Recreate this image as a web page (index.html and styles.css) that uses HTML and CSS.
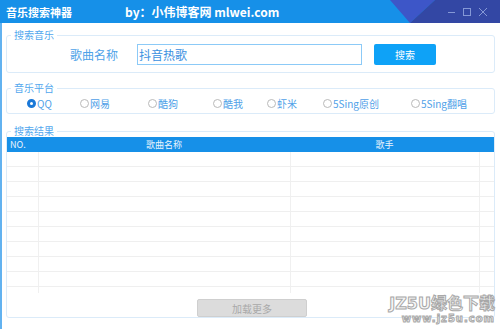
FILE: index.html
```html
<!DOCTYPE html>
<html lang="zh-CN">
<head>
    <meta charset="UTF-8">
    <title>音乐搜索神器</title>
    <link rel="stylesheet" href="styles.css">
</head>
<body>
    <div class="window">
        <div class="titlebar">
            <svg class="title-bg" width="110" height="23" viewBox="0 0 110 23">
                <polygon points="0,0 45,0 20,23" fill="#3d56c8"/>
                <polygon points="45,0 110,0 110,23 20,23" fill="#3347a4"/>
            </svg>
            <span class="app-name">音乐搜索神器</span>
            <span class="by">by：小伟博客网 mlwei.com</span>
            <div class="controls">
                <svg width="46" height="12" viewBox="0 0 46 12">
                    <line x1="1" y1="6.5" x2="8" y2="6.5" stroke="#8598d6" stroke-width="1"/>
                    <rect x="16.5" y="2.5" width="7" height="7" fill="none" stroke="#8598d6" stroke-width="1"/>
                    <line x1="32" y1="2" x2="40" y2="10" stroke="#8598d6" stroke-width="1"/>
                    <line x1="40" y1="2" x2="32" y2="10" stroke="#8598d6" stroke-width="1"/>
                </svg>
            </div>
        </div>

        <div class="main">
            <fieldset class="group search-group">
                <legend>搜索音乐</legend>
                <div class="search-row">
                    <span class="field-label">歌曲名称</span>
                    <input class="song-input" type="text" value="抖音热歌">
                    <button class="search-btn">搜索</button>
                </div>
            </fieldset>

            <fieldset class="group platform-group">
                <legend>音乐平台</legend>
                <div class="radios">
                    <label class="radio checked"><span class="dot"></span>QQ</label>
                    <label class="radio"><span class="dot"></span>网易</label>
                    <label class="radio"><span class="dot"></span>酷狗</label>
                    <label class="radio"><span class="dot"></span>酷我</label>
                    <label class="radio"><span class="dot"></span>虾米</label>
                    <label class="radio"><span class="dot"></span>5Sing原创</label>
                    <label class="radio"><span class="dot"></span>5Sing翻唱</label>
                </div>
            </fieldset>

            <fieldset class="group result-group">
                <legend>搜索结果</legend>
                <div class="grid-wrap">
                    <table class="results">
                        <thead>
                            <tr>
                                <th class="c-no">NO.</th>
                                <th class="c-song">歌曲名称</th>
                                <th class="c-artist">歌手</th>
                                <th class="c-end"></th>
                            </tr>
                        </thead>
                        <tbody>
                            <tr><td></td><td></td><td></td><td></td></tr>
                            <tr><td></td><td></td><td></td><td></td></tr>
                            <tr><td></td><td></td><td></td><td></td></tr>
                            <tr><td></td><td></td><td></td><td></td></tr>
                            <tr><td></td><td></td><td></td><td></td></tr>
                            <tr><td></td><td></td><td></td><td></td></tr>
                            <tr><td></td><td></td><td></td><td></td></tr>
                            <tr><td></td><td></td><td></td><td></td></tr>
                            <tr><td></td><td></td><td></td><td></td></tr>
                            <tr class="last"><td></td><td></td><td></td><td></td></tr>
                        </tbody>
                    </table>
                </div>
                <div class="more-row">
                    <button class="more-btn">加载更多</button>
                </div>
            </fieldset>
        </div>

        <div class="watermark">
            <div class="wm-big">JZ5U绿色下载</div>
            <div class="wm-small">www.jz5u.com</div>
        </div>
    </div>
</body>
</html>
```

FILE: styles.css
```css
body {
    margin: 0;
    font-family: "Noto Sans CJK SC", "Noto Sans", sans-serif;
    background: #fff;
}
.window {
    position: relative;
    width: 500px;
    height: 329px;
    overflow: hidden;
    background: #fff;
}
.titlebar {
    position: relative;
    height: 23px;
    background: #1690e8;
    display: flex;
    align-items: center;
    color: #fff;
    font-weight: bold;
}
.title-bg {
    position: absolute;
    right: 0;
    top: 0;
}
.app-name {
    font-size: 11px;
    margin-left: 6px;
    position: relative;
}
.by {
    font-size: 12px;
    margin-left: 53px;
    position: relative;
}
.controls {
    margin-left: auto;
    margin-right: 7px;
    display: flex;
    position: relative;
    padding-top: 1px;
}

.main {
    border-left: 2px solid #62b2f0;
    height: 306px;
    padding: 6px 5px 0 4px;
}
.group {
    margin: 0;
    border: 1px solid #dbebf9;
    border-radius: 3px;
    padding: 0;
    min-width: 0;
}
.group legend {
    font-size: 10px;
    line-height: 12px;
    color: #52a7ee;
    padding: 0 3px;
    margin-left: 4px;
}

/* search */
.search-group {
    padding: 3px 0 7px 0;
}
.search-row {
    display: flex;
    align-items: center;
    height: 21px;
}
.field-label {
    font-size: 12px;
    color: #4ea2e8;
    margin-left: 63px;
    width: 67px;
}
.song-input {
    box-sizing: border-box;
    width: 225px;
    height: 21px;
    border: 1px solid #8ccaf7;
    padding: 0 0 0 1px;
    font-family: inherit;
    font-size: 12px;
    color: #3a90e0;
    outline: none;
}
.search-btn {
    box-sizing: border-box;
    margin-left: 12px;
    width: 62px;
    height: 21px;
    border: none;
    border-radius: 2px;
    background: #0ea2f7;
    color: #fff;
    font-family: inherit;
    font-size: 10px;
    padding: 0;
}

/* platform */
.platform-group {
    margin-top: 9px;
    padding: 2px 0 4px 0;
}
.radios {
    display: grid;
    grid-template-columns: 53px 68px 65px 54px 56px 88px 1fr;
    padding-left: 20px;
    height: 13px;
    align-items: center;
}
.radio {
    display: flex;
    align-items: center;
    font-size: 10px;
    color: #4f9fe8;
    white-space: nowrap;
}
.dot {
    box-sizing: border-box;
    width: 9px;
    height: 9px;
    border: 1px solid #b9b9b9;
    border-radius: 50%;
    background: #fff;
    margin-right: 1px;
}
.radio.checked .dot {
    border: 3px solid #1a78d8;
}

/* results */
.result-group {
    margin-top: 11px;
    padding: 0;
    height: 193px;
    box-sizing: border-box;
}
.grid-wrap {
    height: 156px;
    overflow: hidden;
}
.results {
    width: 100%;
    border-collapse: collapse;
    table-layout: fixed;
}
.results th {
    height: 15px;
    padding: 0;
    background: #1690e8;
    color: #eaf4fd;
    font-size: 9px;
    font-weight: normal;
    text-align: center;
}
.results th.c-no {
    text-align: left;
    padding-left: 3px;
    width: 28px;
}
.c-song { width: 252px; }
.c-artist { width: 189px; }
.results td {
    height: 14px;
    padding: 0;
    border-bottom: 1px solid #efefef;
    border-right: 1px solid #f0f0f0;
}
.results td:last-child {
    border-right: none;
}
.results tr.last td {
    border-bottom: none;
}
.more-row {
    display: flex;
    justify-content: center;
    padding-top: 6px;
}
.more-btn {
    box-sizing: border-box;
    width: 110px;
    height: 18px;
    margin-left: 3px;
    border: 1px solid #cfcfcf;
    border-radius: 2px;
    background: #dcdcdc;
    color: #a9a9a9;
    font-family: inherit;
    font-size: 10px;
    padding: 0;
}

.watermark {
    position: absolute;
    right: 5px;
    bottom: 4px;
    text-align: right;
    color: #f6f6f6;
    -webkit-text-stroke: 1px #a8a8a8;
    font-family: "DejaVu Sans", "Noto Sans CJK SC", sans-serif;
    font-weight: bold;
}
.wm-big {
    font-size: 16px;
    line-height: 19px;
}
.wm-small {
    font-size: 10px;
    line-height: 12px;
    letter-spacing: 1px;
}
```
